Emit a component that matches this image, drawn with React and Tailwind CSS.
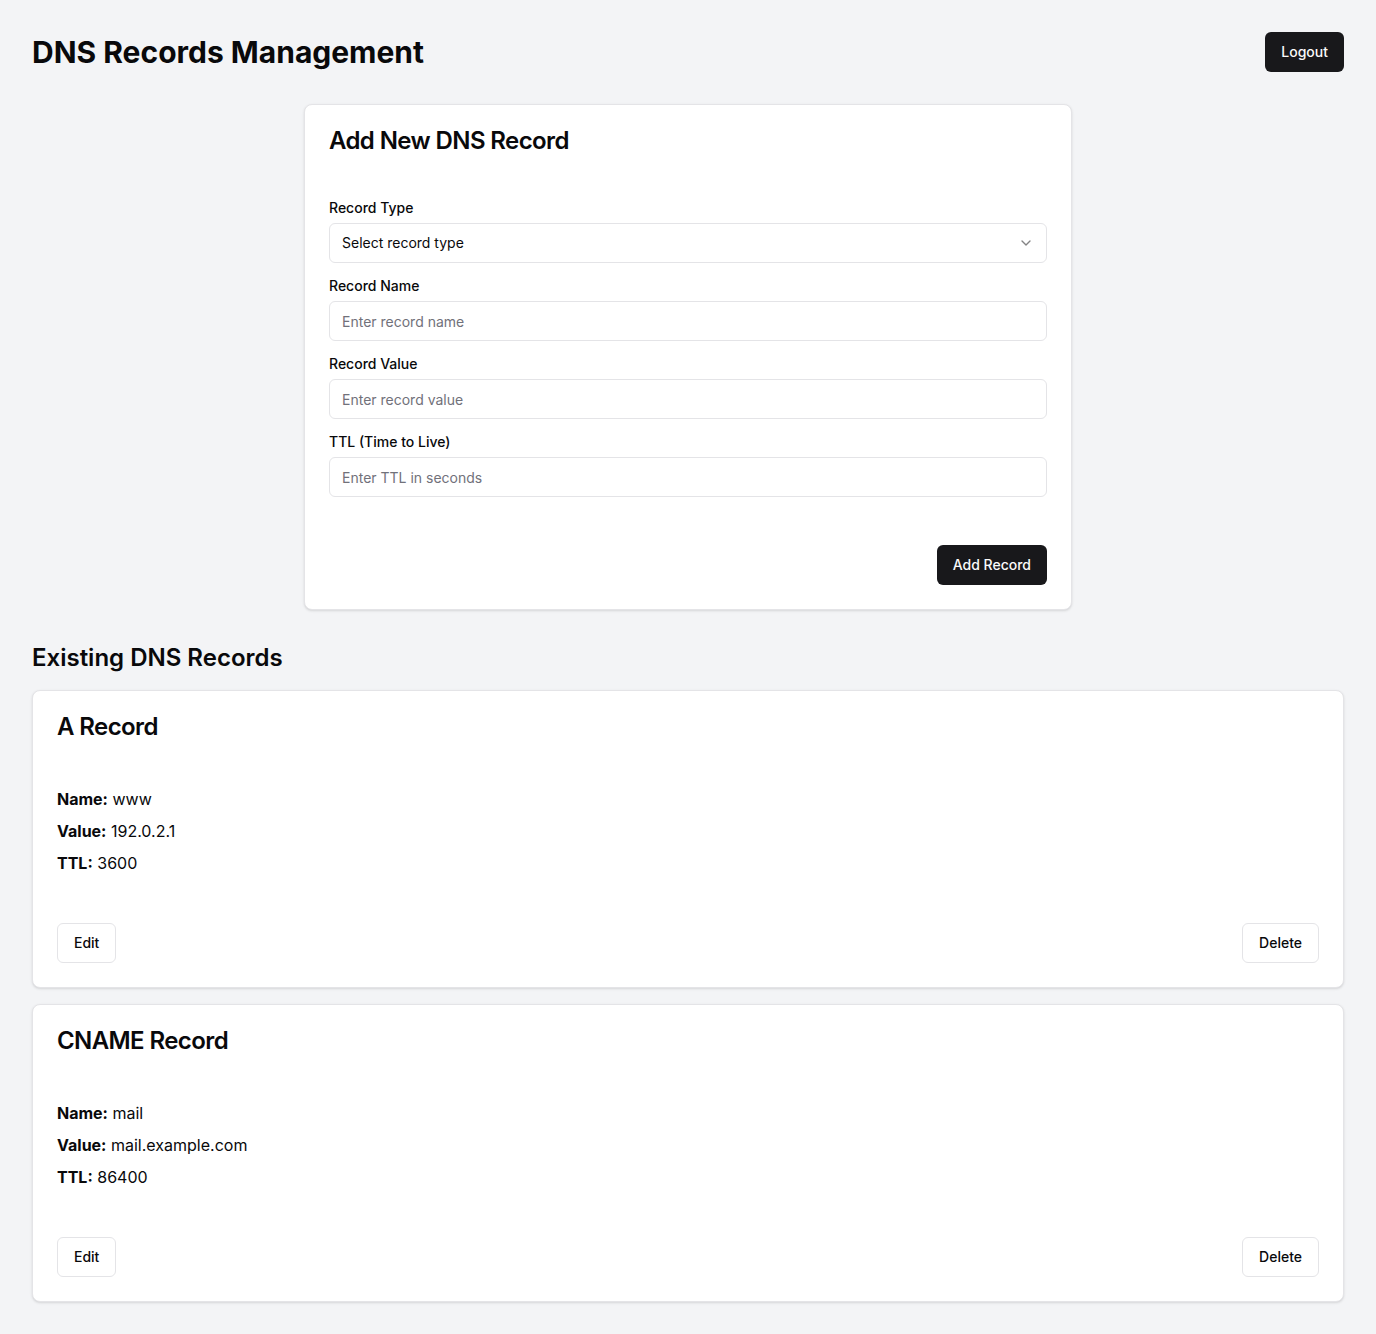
import React, { useState } from 'react';

const records = [
  { id: 1, type: 'A', name: 'www', value: '192.0.2.1', ttl: 3600 },
  { id: 2, type: 'CNAME', name: 'mail', value: 'mail.example.com', ttl: 86400 },
];

const inputClass =
  'flex h-10 w-full rounded-md border border-[#e4e4e7] bg-white px-3 py-2 text-sm text-[#09090b] placeholder:text-[#71717a] outline-none';

const Field = ({ label, children }) => (
  <div className="flex flex-col gap-2">
    <label className="text-sm font-medium leading-none text-[#09090b]">{label}</label>
    {children}
  </div>
);

const OutlineButton = ({ children }) => (
  <button className="inline-flex h-10 items-center justify-center rounded-md border border-[#e4e4e7] bg-white px-4 text-sm font-medium text-[#09090b]">
    {children}
  </button>
);

const App = () => {
  const [form, setForm] = useState({ type: '', name: '', value: '', ttl: '' });

  return (
    <div className="min-h-screen bg-[#f3f4f6] p-8 text-[#09090b]" style={{ fontFamily: 'Inter, "Noto Sans", sans-serif' }}>
      {/* header */}
      <div className="mb-8 flex items-center justify-between">
        <h1 className="text-3xl font-bold">DNS Records Management</h1>
        <button className="inline-flex h-10 items-center rounded-md bg-[#18181b] px-4 text-sm font-medium text-[#fafafa]">
          Logout
        </button>
      </div>

      {/* add form */}
      <div className="mx-auto mb-8 max-w-3xl rounded-lg border border-[#e4e4e7] bg-white shadow-sm">
        <div className="px-6 pt-6">
          <h2 className="text-2xl font-semibold leading-none tracking-tight">Add New DNS Record</h2>
        </div>
        <div className="flex flex-col gap-4 px-6 pb-6 pt-[48px]">
          <Field label="Record Type">
            <button className="flex h-10 w-full items-center justify-between rounded-md border border-[#e4e4e7] bg-white px-3 text-sm text-[#09090b]">
              <span>Select record type</span>
              <svg className="h-4 w-4 opacity-50" viewBox="0 0 24 24" fill="none" stroke="currentColor" strokeWidth="2" strokeLinecap="round" strokeLinejoin="round">
                <path d="m6 9 6 6 6-6" />
              </svg>
            </button>
          </Field>
          <Field label="Record Name">
            <input className={inputClass} placeholder="Enter record name" value={form.name} onChange={(e) => setForm({ ...form, name: e.target.value })} />
          </Field>
          <Field label="Record Value">
            <input className={inputClass} placeholder="Enter record value" value={form.value} onChange={(e) => setForm({ ...form, value: e.target.value })} />
          </Field>
          <Field label="TTL (Time to Live)">
            <input className={inputClass} placeholder="Enter TTL in seconds" value={form.ttl} onChange={(e) => setForm({ ...form, ttl: e.target.value })} />
          </Field>
        </div>
        <div className="flex justify-end px-6 pb-6 pt-6">
          <button className="inline-flex h-10 items-center rounded-md bg-[#18181b] px-4 text-sm font-medium text-[#fafafa]">
            Add Record
          </button>
        </div>
      </div>

      {/* list */}
      <h2 className="mb-4 text-2xl font-semibold">Existing DNS Records</h2>
      <div className="flex flex-col gap-4">
        {records.map((r) => (
          <div key={r.id} className="rounded-lg border border-[#e4e4e7] bg-white shadow-sm">
            <div className="px-6 pt-6">
              <h3 className="text-2xl font-semibold leading-none tracking-tight">{r.type} Record</h3>
            </div>
            <div className="flex flex-col gap-2 px-6 pt-12">
              <p><span className="font-bold">Name:</span> {r.name}</p>
              <p><span className="font-bold">Value:</span> {r.value}</p>
              <p><span className="font-bold">TTL:</span> {r.ttl}</p>
            </div>
            <div className="flex justify-between p-6 pt-12">
              <OutlineButton>Edit</OutlineButton>
              <OutlineButton>Delete</OutlineButton>
            </div>
          </div>
        ))}
      </div>
    </div>
  );
};

export default App;
